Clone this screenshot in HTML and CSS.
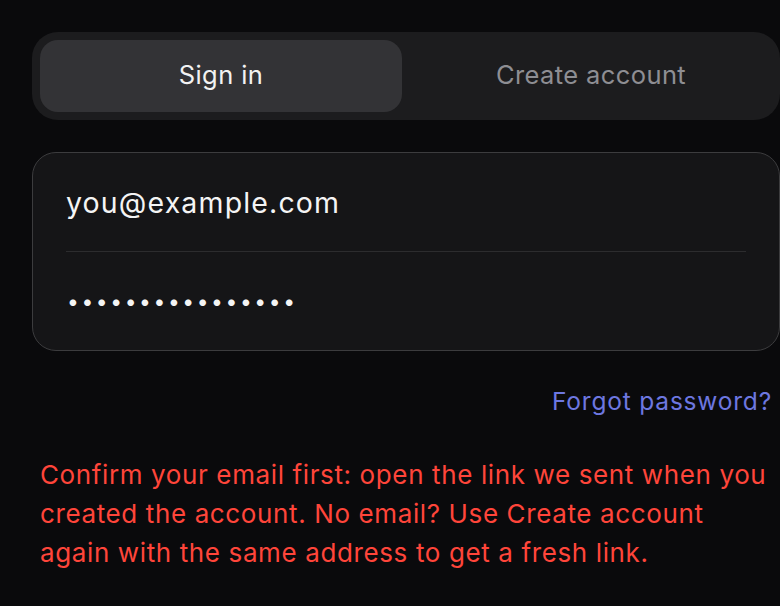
FILE: index.html
```html
<!DOCTYPE html>
<html lang="en">
<head>
<meta charset="utf-8">
<title>Sign in</title>
<link rel="stylesheet" href="styles.css">
</head>
<body>
<main class="auth">
  <div class="segmented" role="tablist">
    <button class="seg-tab is-active" role="tab" aria-selected="true">Sign in</button>
    <button class="seg-tab" role="tab" aria-selected="false">Create account</button>
  </div>
  <form class="fields">
    <input class="field" type="email" value="you@example.com" aria-label="Email">
    <div class="divider"></div>
    <input class="field field-pass" type="password" value="passwordpassword" aria-label="Password">
  </form>
  <div class="forgot-row"><a class="forgot" href="#">Forgot password?</a></div>
  <p class="error">Confirm your email first: open the link we sent when you created the account. No email? Use Create account again with the same address to get a fresh link.</p>
</main>
</body>
</html>
```
FILE: styles.css
```css
html, body {
  margin: 0;
  padding: 0;
  background: #0a0a0c;
}
body {
  font-family: Inter, "Noto Sans", sans-serif;
  color: #f2f2f2;
  overflow: hidden;
}
.auth {
  width: 748px;
  padding: 32px 0 0 32px;
  display: flex;
  flex-direction: column;
}
.segmented {
  display: grid;
  grid-template-columns: 1fr 1fr;
  gap: 8px;
  padding: 8px;
  background: #1c1c1e;
  border-radius: 26px;
}
.seg-tab {
  height: 72px;
  border: 0;
  border-radius: 18px;
  background: transparent;
  color: #8e8e93;
  font-family: inherit;
  font-size: 25.5px;
  font-weight: 400;
  letter-spacing: 0.4px;
  padding: 0 0 3px;
}
.seg-tab.is-active {
  background: #333336;
  color: #f2f2f2;
}
.fields {
  margin: 32px 0 0;
  background: #151517;
  border: 1px solid #3c3c3e;
  border-radius: 24px;
  padding: 0 33px;
  display: flex;
  flex-direction: column;
}
.field {
  height: 98px;
  border: 0;
  outline: 0;
  background: transparent;
  color: #f4f4f4;
  font-family: inherit;
  font-size: 28.5px;
  letter-spacing: 1.15px;
  padding: 0;
  margin: 0;
}
.field-pass {
  font-size: 21px;
  letter-spacing: 2.6px;
  padding-left: 1px;
}
.divider {
  height: 1px;
  background: #2c2c2e;
}
.forgot-row {
  display: flex;
  justify-content: flex-end;
  padding: 34px 8px 0 0;
}
.forgot {
  color: #6d77e0;
  font-size: 24.5px;
  letter-spacing: 0.8px;
  text-decoration: none;
  line-height: 32px;
}
.error {
  margin: 38px 0 0;
  padding: 0 8px;
  color: #ff453a;
  font-size: 26px;
  letter-spacing: 0.62px;
  line-height: 39px;
}
```
